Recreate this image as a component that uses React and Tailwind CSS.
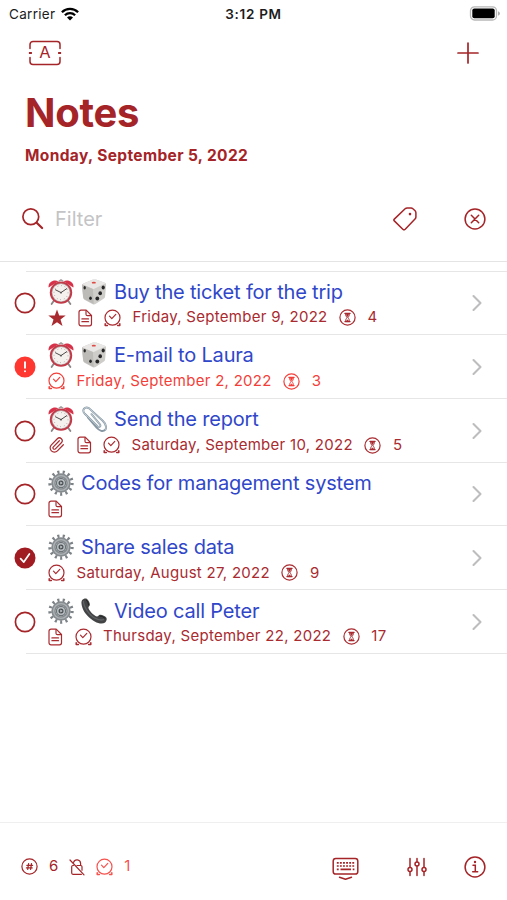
import { ChevronRight, Paperclip } from 'lucide-react'

const notes = [
  {
    id: 1,
    status: 'open',
    emojis: ['clock', 'dice'],
    title: 'Buy the ticket for the trip',
    marks: ['star', 'file'],
    date: 'Friday, September 9, 2022',
    days: 4,
  },
  {
    id: 2,
    status: 'overdue',
    emojis: ['clock', 'dice'],
    title: 'E-mail to Laura',
    marks: [],
    date: 'Friday, September 2, 2022',
    days: 3,
  },
  {
    id: 3,
    status: 'open',
    emojis: ['clock', 'clip'],
    title: 'Send the report',
    marks: ['paperclip', 'file'],
    date: 'Saturday, September 10, 2022',
    days: 5,
  },
  {
    id: 4,
    status: 'open',
    emojis: ['gear'],
    title: 'Codes for management system',
    marks: ['file'],
  },
  {
    id: 5,
    status: 'done',
    emojis: ['gear'],
    title: 'Share sales data',
    marks: [],
    date: 'Saturday, August 27, 2022',
    days: 9,
  },
  {
    id: 6,
    status: 'open',
    emojis: ['gear', 'phone'],
    title: 'Video call Peter',
    marks: ['file'],
    date: 'Thursday, September 22, 2022',
    days: 17,
  },
]

/* Emojis */

function ClockEmoji() {
  return (
    <svg viewBox="0 0 26 26" className="h-[26px] w-[26px]">
      <path d="M6 21.5L3.6 25M20 21.5L22.4 25" stroke="#8d8486" strokeWidth="1.8" strokeLinecap="round" />
      <path d="M.7 8.6C-.6 3.8 5.600-.4 10.400 2.300Z" fill="#d8324a" />
      <path d="M25.300 8.600C26.600 3.800 20.400-.4 15.600 2.300Z" fill="#d8324a" />
      <path d="M10.500 2.600L13 .7l2.500 1.900" fill="none" stroke="#a59a9c" strokeWidth="1.200" />
      <circle cx="13" cy="13.600" r="11.200" fill="#c23a48" />
      <circle cx="13" cy="13.600" r="9.300" fill="#b8acad" />
      <circle cx="13" cy="13.600" r="8.600" fill="#f4f1ee" />
      <circle cx="13" cy="13.600" r="7" fill="none" stroke="#8b8585" strokeWidth="1" strokeDasharray=".6 3.065" />
      <path d="M13 13.600L7.500 10.800M13 13.600L18.800 9.600" stroke="#3c3838" strokeWidth=".9" strokeLinecap="round" />
      <circle cx="13" cy="13.600" r=".9" fill="#555" />
    </svg>
  )
}

function DiceEmoji() {
  return (
    <svg viewBox="0 0 26 26" className="h-[26px] w-[26px]">
      <path d="M2.400 4.500L12 .6q1.500-.4 3 0l8.800 3.200q1.400.6 1.300 2.100l-1 11.500q-.1 1.300-1.200 2.100l-8.400 5.600q-1.300.8-2.800.1l-8.200-4.500q-1.300-.7-1.400-2.200L.9 6.500q-.1-1.500 1.500-2Z" fill="#cfcdca" />
      <path d="M2.200 4.700L12 .6q1.500-.4 3 0l8.800 3.200q.8.300.3.800l-10.800 5.200q-.9.400-1.800 0L2 5.500q-.7-.4.2-.8Z" fill="#eae8e6" />
      <path d="M1 5.400l10.900 4.700.8 14.800L3.600 20.300q-1.300-.7-1.400-2.200Z" fill="#bdbbb8" />
      <ellipse cx="12.800" cy="3.700" rx="2.100" ry=".9" fill="#df4a45" />
      <ellipse cx="3.700" cy="8.800" rx="1.200" ry="1.700" fill="#262626" />
      <ellipse cx="9.500" cy="19.200" rx="1.300" ry="1.700" fill="#262626" />
      <ellipse cx="16.300" cy="19.600" rx="1.900" ry="2" fill="#262626" />
      <ellipse cx="19.200" cy="14.200" rx="1.800" ry="2" fill="#262626" />
      <ellipse cx="22.200" cy="8.500" rx="1.600" ry="2" fill="#262626" />
    </svg>
  )
}

function ClipEmoji() {
  return (
    <svg viewBox="0 0 26 26" className="h-[26px] w-[26px]" fill="none" strokeLinecap="round" strokeLinejoin="round">
      <path
        d="M10.500 8.200L18.700 18.200C20.300 20.200 18.500 22 16.400 20.100L3.800 7.800C.4 4.300 3.800-.5 8.200 2.400L21.700 14.800C24.500 17.500 26 20.500 24.500 23.500C21.800 26.300 18.500 24.800 15.600 21.700L6.800 11.400"
        stroke="#8798a4"
        strokeWidth="1.900"
      />
      <path
        d="M10.500 8.200L18.700 18.200C20.300 20.200 18.500 22 16.400 20.100L3.800 7.800C.4 4.300 3.800-.5 8.200 2.400L21.700 14.800C24.500 17.500 26 20.500 24.500 23.500"
        stroke="#cfd9df"
        strokeWidth=".8"
      />
    </svg>
  )
}

function GearEmoji() {
  return (
    <svg viewBox="0 0 26 26" className="h-[26px] w-[26px]" fill="none">
      <circle cx="13" cy="13" r="11" stroke="#7c8286" strokeWidth="3.400" strokeDasharray="2.100 3.216" />
      <circle cx="13" cy="13" r="7.500" stroke="#858b8f" strokeWidth="4.400" />
      <circle cx="13" cy="13" r="7.400" stroke="#adb2b5" strokeWidth="1.300" />
      <circle cx="13" cy="13" r="5.200" fill="#6d7478" />
      <circle cx="13" cy="13" r="4" fill="#b9bfc3" />
      <circle cx="13" cy="13" r="2.500" fill="#4b5155" />
      <path d="M12.300 11.600v2.800l2.300-1.400Z" fill="#cdd2d5" />
    </svg>
  )
}

function PhoneEmoji() {
  return (
    <svg viewBox="0 0 26 26" className="h-[26px] w-[26px]">
      <path
        d="M1 2.200C2.300.6 4.600.1 6 .9c1.700 1.300 2.900 4 2.900 5.900 0 1.200-1.500 1.600-1.500 2.700.2 2.700 5.300 8.200 8.400 8.900 1.300.2 1.800-1.500 3.200-1.700 2.100-.2 5.100 1.300 6.400 3 .7 1.500.1 3.600-1.300 4.800-2.300 1.700-6.300 1.300-10.400-1.100C8.300 20.500 3.300 15.200 1.500 10 .5 7.200-.1 4 1 2.200Z"
        fill="#424445"
      />
      <path d="M2.500 3.300C2.400 8.500 8.300 17.600 15 20.700c2.800 1.300 5.500 1.600 7.500 1" fill="none" stroke="#606365" strokeWidth="1.300" strokeLinecap="round" />
      <path d="M5.500 2.200c1.300 1.300 2 3.300 2 4.700M19 18.100c2 .1 3.800 1 5 2.200" fill="none" stroke="#202122" strokeWidth="1" strokeLinecap="round" />
    </svg>
  )
}

const emojiMap = {
  clock: ClockEmoji,
  dice: DiceEmoji,
  clip: ClipEmoji,
  gear: GearEmoji,
  phone: PhoneEmoji,
}

/* Line icons */

function StarIcon() {
  return (
    <svg viewBox="0 0 18 18" className="h-[18px] w-[18px]" fill="currentColor">
      <path d="M9 .4l2.200 6.200h6.500l-5.200 4 2 6.400L9 13.200 3.500 17l2-6.400-5.200-4h6.500Z" />
    </svg>
  )
}

function FileIcon() {
  return (
    <svg viewBox="0 0 15 18" className="h-[18px] w-[15px]" fill="none" stroke="currentColor" strokeWidth="1.200" strokeLinejoin="round" strokeLinecap="round">
      <path d="M3 1.200h5.200l5.300 5.300v8.300a2 2 0 0 1-2 2H3a2 2 0 0 1-2-2V3.200a2 2 0 0 1 2-2Z" />
      <path d="M8 1.500v3.700q0 1.500 1.500 1.500h3.800M3.900 9.900h6.600M3.900 12.700h6.600" />
    </svg>
  )
}

function AlarmIcon() {
  return (
    <svg viewBox="0 0 17 18" className="h-[18px] w-[17px]" fill="none" stroke="currentColor" strokeWidth="1.200" strokeLinecap="round" strokeLinejoin="round">
      <circle cx="8.500" cy="8.700" r="7.500" />
      <path d="M5.500 7.200l2.300 2.400 4-4.200" />
      <path d="M1.200 14.700v1.700h2.200M15.800 14.700v1.700h-2.200" strokeWidth="1.500" />
    </svg>
  )
}

function HourglassIcon() {
  return (
    <svg viewBox="0 0 17 17" className="h-[17px] w-[17px]" fill="none" stroke="currentColor" strokeWidth="1.200" strokeLinecap="round">
      <circle cx="8.500" cy="8.500" r="7.600" />
      <path d="M5.900 4.400h5.200M5.900 12.600h5.200" />
      <path d="M6.500 4.500c0 2 .7 2.900 1.500 4.100-.8 1.200-1.500 2-1.500 3.900M10.500 4.500c0 2-.7 2.900-1.500 4.100.8 1.200 1.500 2 1.500 3.900" strokeWidth="1" />
      <path d="M6.900 4.800h3.200L8.500 7.800ZM7 12.300l1.500-1.600 1.500 1.600Z" fill="currentColor" strokeWidth=".5" />
    </svg>
  )
}

function SearchIcon() {
  return (
    <svg viewBox="0 0 24 24" className="h-6 w-6" fill="none" stroke="currentColor" strokeLinecap="round">
      <circle cx="9.800" cy="9.800" r="7.900" strokeWidth="1.700" />
      <path d="M15.700 15.700l5.400 5.300" strokeWidth="2.200" />
    </svg>
  )
}

function TagIcon() {
  return (
    <svg viewBox="0 0 24 24" className="h-6 w-6" fill="none" stroke="currentColor" strokeWidth="1.500" strokeLinejoin="round">
      <path d="M1.300 12.100L12.100 1.800q.9-.8 2.100-.8h3.900q1 0 1.800.7l2.200 2q.8.800.8 2v4.200q0 1.200-.9 2.100L12.200 22.300q-1.200 1.200-2.400 0l-8.500-8.400q-.9-.9 0-1.800Z" />
      <circle cx="17" cy="7.100" r="1.300" fill="currentColor" stroke="none" />
    </svg>
  )
}

function LabelIcon() {
  return (
    <svg viewBox="0 0 34 26" className="h-[26px] w-[34px]" fill="none" stroke="currentColor" strokeWidth="1.500" strokeLinecap="round">
      <path d="M2 8.500V4.500A3 3 0 0 1 5 1.500h24a3 3 0 0 1 3 3V8.500M2 17.500v4a3 3 0 0 0 3 3h24a3 3 0 0 0 3-3v-4" />
      <path d="M2 13h.8M31.200 13h.8" strokeWidth="2.200" strokeLinecap="square" />
    </svg>
  )
}

function LockOffIcon() {
  return (
    <svg viewBox="0 0 16 18" className="h-[18px] w-4" fill="none" stroke="currentColor" strokeWidth="1.200" strokeLinecap="round">
      <path d="M4.600 4.400a3.600 3.600 0 0 1 7 .8v2.300M4.500 7.500H3.900q-1.200 0-1.200 1.200v6.400q0 1.200 1.200 1.200h8.500M8 7.500h3.700q1.300 0 1.300 1.200v3.500M1 2l14 14.800" />
    </svg>
  )
}

function KeyboardIcon() {
  return (
    <svg viewBox="0 0 27 24" className="h-6 w-[27px]" fill="none" stroke="currentColor" strokeLinecap="round" strokeLinejoin="round">
      <rect x="1.200" y="1.400" width="24.600" height="15.600" rx="2.600" strokeWidth="1.500" />
      <path d="M4.800 5.800h17.500M4.800 9h17.500" strokeWidth="1.700" strokeLinecap="butt" strokeDasharray="1.900 1.200" />
      <path d="M4.800 12.400h1.900M8.500 12.400h10.500M20.700 12.400h1.700" strokeWidth="1.700" strokeLinecap="butt" />
      <path d="M7.500 20.200l6 2.100 6-2.100" strokeWidth="1.500" />
    </svg>
  )
}

function SlidersIcon() {
  return (
    <svg viewBox="0 0 20 20" className="h-5 w-5" fill="none" stroke="currentColor" strokeWidth="1.500" strokeLinecap="round">
      <path d="M3 1.500v8.800M3 14.700v3.800M10 1.500v3.200M10 9.100v9.400M17 1.500v8.800M17 14.700v3.800" />
      <circle cx="3" cy="12.500" r="2" />
      <circle cx="10" cy="6.900" r="2" />
      <circle cx="17" cy="12.500" r="2" />
    </svg>
  )
}

function StatusMark({ status }) {
  return (
    <svg viewBox="0 0 22 22" className="-ml-3 h-[22px] w-[22px] shrink-0" fill="none" strokeLinecap="round" strokeLinejoin="round">
      {status === 'open' && <circle cx="11" cy="11" r="9.600" stroke="#a52428" strokeWidth="1.700" />}
      {status === 'overdue' && (
        <>
          <circle cx="11" cy="11" r="10.500" fill="#fe3830" />
          <path d="M11 6.300v5.400M11 15.100v.1" stroke="#fff" strokeWidth="1.900" />
        </>
      )}
      {status === 'done' && (
        <>
          <circle cx="11" cy="11" r="10.500" fill="#a01c22" />
          <path d="M6.600 11.700l3.200 3.400 5.600-8.200" stroke="#fff" strokeWidth="1.700" />
        </>
      )}
    </svg>
  )
}

function Mark({ type }) {
  if (type === 'star') return <StarIcon />
  if (type === 'paperclip') return <Paperclip className="h-[18px] w-[17px]" strokeWidth={1.7} />
  return <FileIcon />
}

function NoteRow({ note }) {
  return (
    <li className="ml-[26px] flex h-[63.850px] items-center border-b border-[#e6e6e6] pt-px">
      <StatusMark status={note.status} />
      <div className="ml-3 flex h-full flex-1 flex-col pt-1.5">
        <div className="flex h-[27px] items-center gap-[7px]">
          {note.emojis.map((name) => {
            const Emoji = emojiMap[name]
            return <Emoji key={name} />
          })}
          <span className="text-[20px] tracking-[-0.18px] whitespace-nowrap text-[#3047c9]">{note.title}</span>
        </div>
        <div
          className={`flex h-[25px] items-center gap-[11.500px] text-[15px] tracking-[0.28px] whitespace-nowrap ${
            note.status === 'overdue' ? 'text-[#f33f3a]' : 'text-[#a92b30]'
          }`}
        >
          {note.marks.map((type) => (
            <Mark key={type} type={type} />
          ))}
          {note.date && (
            <>
              <AlarmIcon />
              <span>{note.date}</span>
              <HourglassIcon />
              <span>{note.days}</span>
            </>
          )}
        </div>
      </div>
      <ChevronRight className="mr-4 h-7 w-7 text-[#bdbdbf]" strokeWidth={1.8} />
    </li>
  )
}

export default function App() {
  return (
    <div className="flex h-[900px] w-[507px] flex-col overflow-hidden bg-white font-['Inter',sans-serif] text-[#a52428]">
      {/* Status bar */}
      <div className="grid h-[27px] grid-cols-3 items-center px-[9px] text-[13.500px] text-[#1c1c1c]">
        <div className="flex items-center gap-1.5">
          <span className="pt-px tracking-[0.3px]">Carrier</span>
          <svg viewBox="0 0 18 14" className="h-3.5 w-[18px]" fill="none" stroke="#000" strokeWidth="2.300">
            <path d="M.9 5.200a11.600 11.600 0 0 1 16.200 0M3.900 8.300a7.300 7.300 0 0 1 10.200 0" />
            <path d="M9 13.400L6 10.600a4.200 4.200 0 0 1 6 0Z" fill="#000" stroke="none" />
          </svg>
        </div>
        <span className="pt-px text-center font-semibold tracking-[0.700px] whitespace-nowrap">3:12 PM</span>
        <svg viewBox="0 0 32 15" className="-mr-[3px] h-[15px] w-8 justify-self-end">
          <rect x="1.500" y=".8" width="26" height="13.200" rx="4" fill="#fff" stroke="#b8b8b8" strokeWidth="1.300" />
          <rect x="3.300" y="2.600" width="22.400" height="9.600" rx="2" fill="#000" />
          <path d="M29 5.300q2 .7 2 2.200t-2 2.200Z" fill="#b0b0b0" />
        </svg>
      </div>

      {/* Header */}
      <header className="flex h-[50px] items-center justify-between pt-px pr-7 pl-7">
        <div className="grid place-items-center">
          <span className="col-start-1 row-start-1 text-[16.500px] leading-none">A</span>
          <span className="col-start-1 row-start-1">
            <LabelIcon />
          </span>
        </div>
        <svg viewBox="0 0 22 22" className="h-[22px] w-[22px]" stroke="currentColor" strokeWidth="1.700" strokeLinecap="round">
          <path d="M11 1v20M1 11h20" />
        </svg>
      </header>
      <div className="pl-[25px]">
        <h1 className="mt-3 h-12 text-[40px] leading-[48px] font-bold tracking-[-0.300px]">Notes</h1>
        <p className="mt-[7px] h-6 text-[15.500px] leading-6 font-bold tracking-[0.370px]">Monday, September 5, 2022</p>
      </div>

      {/* Filter */}
      <div className="mt-[7px] flex h-[87px] items-center border-b border-[#e4e4e4] pt-0.5 pr-[21px] pl-[21px]">
        <SearchIcon />
        <span className="ml-2.5 flex-1 text-[20px] text-[#c4c4c6]">Filter</span>
        <TagIcon />
        <svg viewBox="0 0 22 22" className="ml-[47px] h-[22px] w-[22px]" fill="none" stroke="currentColor" strokeWidth="1.500" strokeLinecap="round">
          <circle cx="11" cy="11" r="9.900" />
          <path d="M7.300 7.300l7.400 7.400M14.700 7.300l-7.400 7.400" />
        </svg>
      </div>

      <div className="mt-[9px] ml-[26px] h-px shrink-0 bg-[#e6e6e6]" />
      <ul className="-mt-px flex-1">
        {notes.map((note) => (
          <NoteRow key={note.id} note={note} />
        ))}
      </ul>

      {/* Toolbar */}
      <footer className="flex h-[78px] items-start justify-between border-t border-[#efefef] pt-8 pr-[21px] pl-[21px]">
        <div className="flex h-[23px] items-center gap-[11px] text-[15px]">
          <svg viewBox="0 0 17 17" className="h-[17px] w-[17px]" fill="none" stroke="currentColor" strokeWidth="1.200" strokeLinecap="round">
            <circle cx="8.500" cy="8.500" r="7.600" />
            <path d="M7.600 5.700l-.9 5.700M10.500 5.700l-.9 5.700M5.800 7.300h5.800M5.400 9.900h5.800" />
          </svg>
          <span>6</span>
          <LockOffIcon />
          <span className="flex items-center gap-[11px] text-[#f6534e]">
            <AlarmIcon />
            <span>1</span>
          </span>
        </div>
        <div className="flex h-[23px] items-center">
          <span className="pt-1">
            <KeyboardIcon />
          </span>
          <span className="ml-12">
            <SlidersIcon />
          </span>
          <svg viewBox="0 0 22 22" className="ml-[37px] h-[22px] w-[22px]" fill="none" stroke="currentColor" strokeWidth="1.500" strokeLinecap="round">
            <circle cx="11" cy="11" r="9.900" />
            <path d="M9 9.300h2.300v6.300M8.700 15.700h5" />
            <circle cx="11" cy="6" r="1.200" fill="currentColor" stroke="none" />
          </svg>
        </div>
      </footer>
    </div>
  )
}
